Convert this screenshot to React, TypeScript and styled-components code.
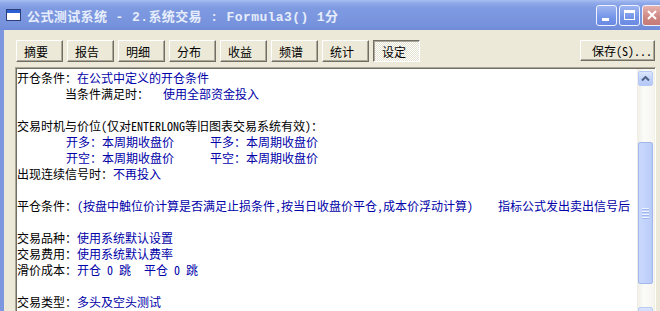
import styled, { createGlobalStyle } from 'styled-components';

const CJK = `"Noto Sans Mono CJK SC", "Noto Sans CJK SC", sans-serif`;

const GlobalStyle = createGlobalStyle`
  html, body { margin: 0; padding: 0; background: #ECE9D8; }
  body { width: 660px; height: 311px; overflow: hidden; }
`;

const Window = styled.div`
  width: 660px;
  height: 311px;
  overflow: hidden;
  display: flex;
  flex-direction: column;
  font-family: ${CJK};
  font-size: 12px;
`;

const TitleBar = styled.div`
  height: 30px;
  flex: none;
  display: flex;
  align-items: center;
  padding-left: 6px;
  background: linear-gradient(180deg, #a9bff1 0, #8fa9ea 3px, #7e9ae1 8px, #7893dd 24px, #6f8bd8 30px);
`;

const TitleText = styled.div`
  margin-left: 6px;
  font-family: "Liberation Mono", "Noto Sans CJK SC", monospace;
  font-size: 13px;
  font-weight: bold;
  letter-spacing: 0.4px;
  color: #e6edfb;
  white-space: pre;
`;

const Caption = styled.div`
  margin-left: auto;
  margin-right: -3px;
  display: flex;
  gap: 2px;
  align-self: flex-start;
  margin-top: 5px;
`;

const CapBtn = styled.div<{ $close?: boolean }>`
  width: 21px;
  height: 21px;
  box-sizing: border-box;
  border: 1px solid #eef2fc;
  border-radius: 3px;
  display: flex;
  align-items: center;
  justify-content: center;
  background: ${(p) =>
    p.$close
      ? 'linear-gradient(180deg, #e6b2ae, #cf8783 60%, #c47a77)'
      : 'linear-gradient(180deg, #9db5f1, #7595e8 60%, #6a8ae3)'};
`;

const Body = styled.div`
  flex: 1;
  display: flex;
  flex-direction: column;
  background: #ece9d8;
  border-left: 4px solid #7d98df;
  padding: 10px 5px 0 11px;
  min-height: 0;
`;

const Toolbar = styled.div`
  display: flex;
  align-items: flex-start;
  height: 22px;
  flex: none;
`;

const Tabs = styled.div`
  display: flex;
  gap: 4px;
  margin-left: 1px;
`;

const Btn = styled.div<{ $pressed?: boolean }>`
  width: 47px;
  height: 22px;
  box-sizing: border-box;
  padding-left: ${(p) => (p.$pressed ? 8 : 7)}px;
  padding-top: ${(p) => (p.$pressed ? 1 : 0)}px;
  display: flex;
  align-items: center;
  color: #000;
  border-style: solid;
  border-width: 1px;
  border-color: ${(p) => (p.$pressed ? '#716f64 #fff #fff #716f64' : '#fff #716f64 #716f64 #fff')};
  box-shadow: ${(p) => (p.$pressed ? 'inset 1px 1px #aca899' : 'inset -1px -1px #aca899')};
  background: ${(p) =>
    p.$pressed ? 'repeating-conic-gradient(#ffffff 0 25%, #e4e1d1 0 50%) 0 0 / 2px 2px' : '#ece9d8'};
`;

const SaveBtn = styled(Btn)`
  margin-left: auto;
  width: 75px;
  height: 21px;
  padding-left: 11px;
`;

const Panel = styled.div`
  margin-top: 5px;
  margin-right: -1px;
  height: 253px;
  flex: none;
  display: flex;
  background: #fff;
  border-style: solid;
  border-width: 1px;
  border-color: #aca899 #fff #fff #aca899;
  box-shadow: inset 1px 1px #716f64, inset -1px -1px #f1efe2;
  padding: 1px;
`;

const Content = styled.div`
  flex: 1;
  padding-top: 1px;
  line-height: 16px;
`;

const Line = styled.div<{ $indent?: number }>`
  height: 16px;
  display: flex;
  white-space: pre;
  padding-left: ${(p) => p.$indent ?? 0}px;
`;

const Label = styled.span`
  color: #000;
`;

const Val = styled.span<{ $gap?: number; $w?: number }>`
  color: #0000a8;
  margin-left: ${(p) => p.$gap ?? 0}px;
  ${(p) => (p.$w ? `width: ${p.$w}px; flex: none;` : '')}
`;

const ScrollBar = styled.div`
  width: 17px;
  flex: none;
  display: flex;
  flex-direction: column;
  align-items: center;
  background: linear-gradient(90deg, #eeede5, #fbfbf8 40%, #f6f5f0);
`;

const Arrow = styled.div<{ $top?: number }>`
  width: 15px;
  height: 15px;
  margin-top: ${(p) => p.$top ?? 0}px;
  box-sizing: border-box;
  flex: none;
  border: 1px solid #b7c9f5;
  border-radius: 2px;
  background: linear-gradient(180deg, #dbe5fd, #c3d3fb 50%, #b5c8f7);
  display: flex;
  align-items: center;
  justify-content: center;
`;

const Track = styled.div`
  flex: 1;
  width: 15px;
  display: flex;
  flex-direction: column;
`;

const Thumb = styled.div<{ $top: number; $h: number }>`
  margin-top: ${(p) => p.$top}px;
  height: ${(p) => p.$h}px;
  box-sizing: border-box;
  border: 1px solid #a2b7ee;
  border-radius: 2px;
  background: linear-gradient(90deg, #c9d8fc, #c2d3fc 50%, #b8cbf8);
  display: flex;
  flex-direction: column;
  align-items: center;
  justify-content: center;
  gap: 1px;
`;

const Grip = styled.div`
  width: 7px;
  height: 1px;
  background: #eef3fe;
  box-shadow: 0 1px #9fb7ee;
  margin-bottom: 1px;
`;

const Chevron = ({ down }: { down?: boolean }) => (
  <svg width="9" height="6" viewBox="0 0 9 6">
    <path
      d={down ? 'M1 1.5 L4.5 5 L8 1.5' : 'M1 4.5 L4.5 1 L8 4.5'}
      fill="none"
      stroke="#4d6185"
      strokeWidth="2"
    />
  </svg>
);

const tabs = ['摘要', '报告', '明细', '分布', '收益', '频谱', '统计', '设定'];

export default function App() {
  return (
    <>
      <GlobalStyle />
      <Window>
        <TitleBar>
          <svg width="15" height="12" viewBox="0 0 15 12">
            <rect x="0.5" y="0.5" width="14" height="11" fill="#fff" stroke="#2a3f7c" />
            <rect x="1" y="1" width="13" height="3" fill="#2d5fd4" />
          </svg>
          <TitleText>公式测试系统 - 2.系统交易 : Formula3() 1分</TitleText>
          <Caption>
            <CapBtn>
              <svg width="19" height="19" viewBox="0 0 19 19">
                <rect x="5" y="12" width="7" height="3" fill="#fff" />
              </svg>
            </CapBtn>
            <CapBtn>
              <svg width="19" height="19" viewBox="0 0 19 19">
                <rect x="4.5" y="4.5" width="10" height="9" fill="none" stroke="#fff" />
                <rect x="4" y="4" width="11" height="3" fill="#fff" />
              </svg>
            </CapBtn>
            <CapBtn $close>
              <svg width="19" height="19" viewBox="0 0 19 19">
                <path d="M5 5 L13 13 M13 5 L5 13" stroke="#fff" strokeWidth="2" />
              </svg>
            </CapBtn>
          </Caption>
        </TitleBar>
        <Body>
          <Toolbar>
            <Tabs>
              {tabs.map((t) => (
                <Btn key={t} $pressed={t === '设定'}>
                  {t}
                </Btn>
              ))}
            </Tabs>
            <SaveBtn>保存(S)...</SaveBtn>
          </Toolbar>
          <Panel>
            <Content>
              <Line>
                <Label>开仓条件：</Label>
                <Val>在公式中定义的开仓条件</Val>
              </Line>
              <Line $indent={48}>
                <Label>当条件满足时：</Label>
                <Val $gap={14}>使用全部资金投入</Val>
              </Line>
              <Line />
              <Line>
                <Label>交易时机与价位(仅对ENTERLONG等旧图表交易系统有效)：</Label>
              </Line>
              <Line $indent={49}>
                <Val $w={144}>开多：本周期收盘价</Val>
                <Val>平多：本周期收盘价</Val>
              </Line>
              <Line $indent={49}>
                <Val $w={144}>开空：本周期收盘价</Val>
                <Val>平空：本周期收盘价</Val>
              </Line>
              <Line>
                <Label>出现连续信号时：</Label>
                <Val>不再投入</Val>
              </Line>
              <Line />
              <Line>
                <Label>平仓条件：</Label>
                <Val $w={421}>(按盘中触位价计算是否满足止损条件,按当日收盘价平仓,成本价浮动计算)</Val>
                <Val>指标公式发出卖出信号后</Val>
              </Line>
              <Line />
              <Line>
                <Label>交易品种：</Label>
                <Val>使用系统默认设置</Val>
              </Line>
              <Line>
                <Label>交易费用：</Label>
                <Val>使用系统默认费率</Val>
              </Line>
              <Line>
                <Label>滑价成本：</Label>
                <Val $w={67}>开仓 0 跳</Val>
                <Val>平仓 0 跳</Val>
              </Line>
              <Line />
              <Line>
                <Label>交易类型：</Label>
                <Val>多头及空头测试</Val>
              </Line>
            </Content>
            <ScrollBar>
              <Arrow $top={2}>
                <Chevron />
              </Arrow>
              <Track>
                <Thumb $top={56} $h={142}>
                  <Grip />
                  <Grip />
                  <Grip />
                  <Grip />
                </Thumb>
              </Track>
              <Arrow>
                <Chevron down />
              </Arrow>
            </ScrollBar>
          </Panel>
        </Body>
      </Window>
    </>
  );
}
